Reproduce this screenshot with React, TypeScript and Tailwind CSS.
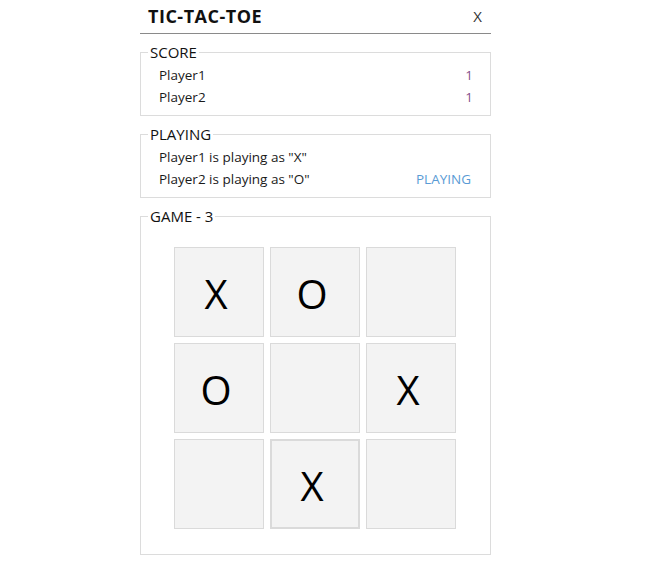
import { useState } from 'react';

type Mark = 'X' | 'O' | '';

const board: Mark[] = ['X', 'O', '', 'O', '', 'X', '', 'X', ''];

export default function App() {
  const [focused] = useState(7);

  return (
    <div className="w-[645px] h-[562px] bg-white text-[#1a1a1a] font-['Open_Sans','Noto_Sans',sans-serif]">
      <div className="ml-[140px] w-[351px]">
        {/* Header */}
        <div className="h-[34px] flex items-center justify-between pl-[8px] pr-[9px] border-b border-[#8a8a8a]">
          <h1 className="text-[18px] font-bold text-[#111] tracking-[0.5px]">TIC-TAC-TOE</h1>
          <button className="text-[15px] text-[#333] leading-none">X</button>
        </div>

        {/* Score */}
        <fieldset className="mt-[8px] border border-[#dcdcdc]">
          <legend className="ml-[7px] px-[2px] text-[15px] leading-[21px] text-[#111]">SCORE</legend>
          <div className="pl-[18px] pr-[17px] pt-[1px] pb-[7px] text-[13.5px]">
            <div className="flex justify-between h-[22px] items-center">
              <span>Player1</span>
              <span className="text-[#86508c]">1</span>
            </div>
            <div className="flex justify-between h-[22px] items-center">
              <span>Player2</span>
              <span className="text-[#86508c]">1</span>
            </div>
          </div>
        </fieldset>

        {/* Playing */}
        <fieldset className="mt-[8px] border border-[#dcdcdc]">
          <legend className="ml-[7px] px-[2px] text-[15px] leading-[21px] text-[#111]">PLAYING</legend>
          <div className="pl-[18px] pr-[19px] pt-[1px] pb-[7px] text-[13.5px]">
            <div className="flex justify-between h-[22px] items-center">
              <span>Player1 is playing as "X"</span>
            </div>
            <div className="flex justify-between h-[22px] items-center">
              <span>Player2 is playing as "O"</span>
              <span className="text-[#5a9bd5] text-[13.5px]">PLAYING</span>
            </div>
          </div>
        </fieldset>

        {/* Game */}
        <fieldset className="mt-[8px] border border-[#dcdcdc]">
          <legend className="ml-[7px] px-[2px] text-[15px] leading-[21px] text-[#111]">GAME - 3</legend>
          <div className="pl-[33px] pt-[20px] pb-[25px]">
            <div className="grid grid-cols-[90px_90px_90px] gap-[6px]">
              {board.map((m, i) => (
                <button
                  key={i}
                  className={`w-[90px] h-[90px] bg-[#f3f3f3] flex items-center justify-center pr-[6px] pt-[3px] text-[40px] text-black leading-none ${
                    i === focused ? 'border-2 border-[#dadada]' : 'border border-[#dadada]'
                  }`}
                >
                  {m}
                </button>
              ))}
            </div>
          </div>
        </fieldset>
      </div>
    </div>
  );
}
